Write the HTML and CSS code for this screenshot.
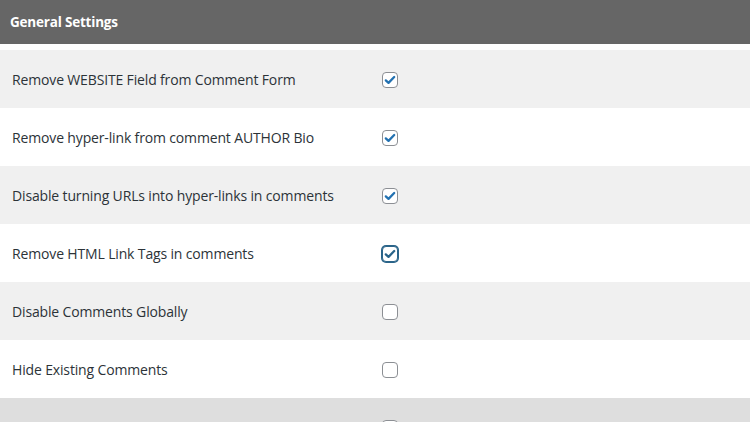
FILE: index.html
```html
<!DOCTYPE html>
<html>
<head>
<meta charset="utf-8">
<link rel="stylesheet" href="styles.css">
</head>
<body>
<div class="panel">
  <div class="panel-head">General Settings</div>
  <div class="rows">
    <div class="row alt">
      <div class="label">Remove WEBSITE Field from Comment Form</div>
      <div class="cell"><span class="cb checked"><svg viewBox="0 0 16 16"><path d="M3.2 8.4 6.3 11.3 12.8 4.6" /></svg></span></div>
    </div>
    <div class="row">
      <div class="label">Remove hyper-link from comment AUTHOR Bio</div>
      <div class="cell"><span class="cb checked"><svg viewBox="0 0 16 16"><path d="M3.2 8.4 6.3 11.3 12.8 4.6" /></svg></span></div>
    </div>
    <div class="row alt">
      <div class="label">Disable turning URLs into hyper-links in comments</div>
      <div class="cell"><span class="cb checked"><svg viewBox="0 0 16 16"><path d="M3.2 8.4 6.3 11.3 12.8 4.6" /></svg></span></div>
    </div>
    <div class="row">
      <div class="label">Remove HTML Link Tags in comments</div>
      <div class="cell"><span class="cb checked focus"><svg viewBox="0 0 16 16"><path d="M3.2 8.4 6.3 11.3 12.8 4.6" /></svg></span></div>
    </div>
    <div class="row alt">
      <div class="label">Disable Comments Globally</div>
      <div class="cell"><span class="cb"></span></div>
    </div>
    <div class="row">
      <div class="label">Hide Existing Comments</div>
      <div class="cell"><span class="cb"></span></div>
    </div>
    <div class="row hover">
      <div class="label"></div>
      <div class="cell"><span class="cb"></span></div>
    </div>
  </div>
</div>
</body>
</html>
```

FILE: styles.css
```css
html, body {
  margin: 0;
  padding: 0;
  background: #ffffff;
}
body {
  font-family: "Open Sans", "Noto Sans", sans-serif;
  width: 750px;
  height: 422px;
  overflow: hidden;
}
.panel-head {
  height: 44px;
  background: #666666;
  color: #ffffff;
  font-weight: 700;
  font-size: 13.5px;
  display: flex;
  align-items: center;
  padding-left: 10px;
  letter-spacing: -0.2px;
}
.rows {
  margin-top: 6px;
  display: flex;
  flex-direction: column;
}
.row {
  height: 58px;
  display: grid;
  grid-template-columns: 382px 1fr;
  align-items: center;
  background: #ffffff;
}
.row.alt {
  background: #f0f0f0;
}
.row.hover {
  background: #dedede;
}
.label {
  padding-left: 12px;
  font-size: 14px;
  font-weight: 500;
  color: #2c3338;
  letter-spacing: -0.15px;
  padding-top: 1px;
}
.cell {
  display: flex;
  align-items: center;
  padding-top: 2px;
}
.cb {
  box-sizing: border-box;
  width: 16px;
  height: 16px;
  border: 1px solid #8c8f94;
  border-radius: 4px;
  background: #ffffff;
  display: flex;
  align-items: center;
  justify-content: center;
}
.cb svg {
  width: 14px;
  height: 14px;
  fill: none;
  stroke: #2271b1;
  stroke-width: 2.6;
  stroke-linecap: round;
  stroke-linejoin: round;
}
.cb.focus {
  border-color: #2a6489;
  box-shadow: 0 0 0 1px #2a6489;
}
.cb.focus svg {
  stroke: #2a6489;
}
```
